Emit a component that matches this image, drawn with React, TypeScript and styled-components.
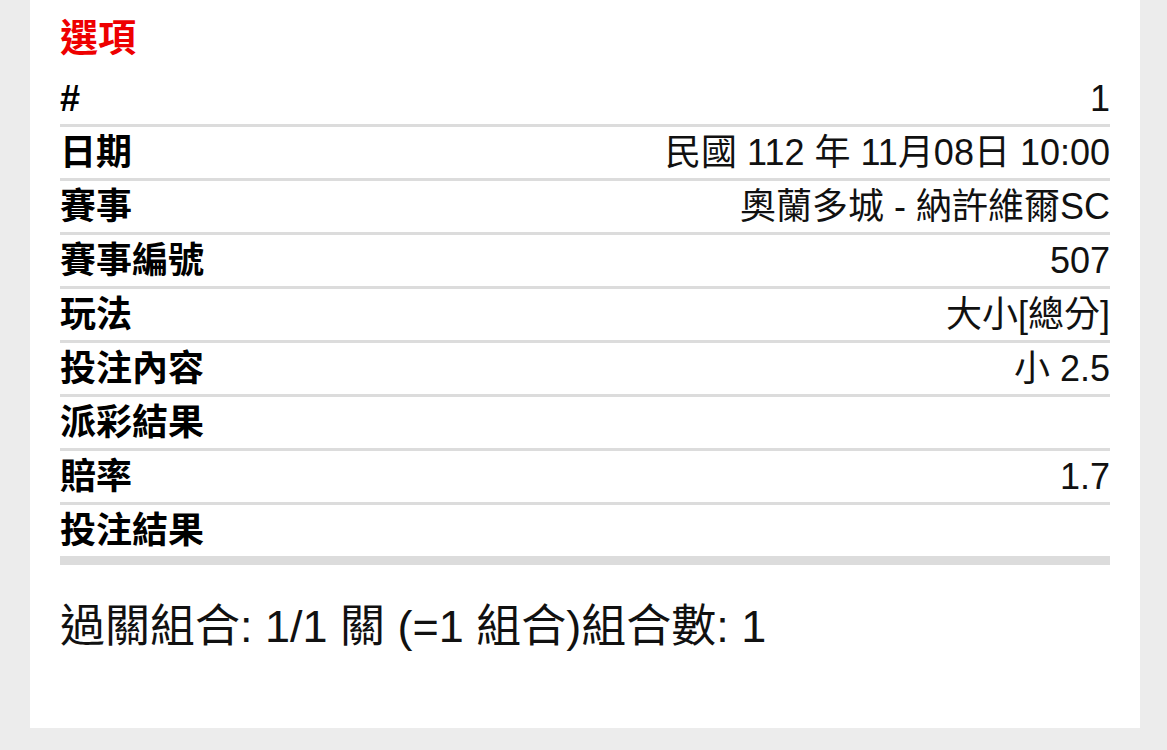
import * as React from 'react';
import styled, { createGlobalStyle } from 'styled-components';

const GlobalStyle = createGlobalStyle`
  html, body {
    margin: 0;
    padding: 0;
    background: #ececec;
  }
  body {
    font-family: "Liberation Sans", "Noto Sans CJK TC", sans-serif;
    color: #000;
  }
`;

const Page = styled.div`
  width: 1167px;
  height: 750px;
  padding: 0 27px 0 30px;
  box-sizing: border-box;
`;

const Panel = styled.section`
  background: #fff;
  padding: 16px 30px 76px;
`;

const Title = styled.h2`
  margin: 0 0 13px;
  font-size: 38px;
  line-height: 44px;
  font-weight: 700;
  color: #ee0000;
`;

const Table = styled.div`
  display: flex;
  flex-direction: column;
`;

const Row = styled.div`
  display: flex;
  align-items: center;
  justify-content: space-between;
  height: 51px;
  border-bottom: 3px solid #dcdcdc;

  &:last-child {
    border-bottom-width: 9px;
  }
`;

const Label = styled.span`
  font-size: 36px;
  font-weight: 700;
  line-height: 40px;
`;

const Value = styled.span`
  font-size: 36px;
  line-height: 40px;
  color: #111;
  text-align: right;
`;

const Summary = styled.p`
  margin: 37px 0 0;
  font-size: 45px;
  line-height: 50px;
  color: #111;
`;

type Item = { label: string; value?: string };

const items: Item[] = [
  { label: '#', value: '1' },
  { label: '日期', value: '民國 112 年 11月08日 10:00' },
  { label: '賽事', value: '奧蘭多城 - 納許維爾SC' },
  { label: '賽事編號', value: '507' },
  { label: '玩法', value: '大小[總分]' },
  { label: '投注內容', value: '小 2.5' },
  { label: '派彩結果' },
  { label: '賠率', value: '1.7' },
  { label: '投注結果' },
];

export default function App() {
  return (
    <Page>
      <GlobalStyle />
      <Panel>
        <Title>選項</Title>
        <Table>
          {items.map((item) => (
            <Row key={item.label}>
              <Label>{item.label}</Label>
              <Value>{item.value}</Value>
            </Row>
          ))}
        </Table>
        <Summary>過關組合: 1/1 關 (=1 組合)組合數: 1</Summary>
      </Panel>
    </Page>
  );
}
